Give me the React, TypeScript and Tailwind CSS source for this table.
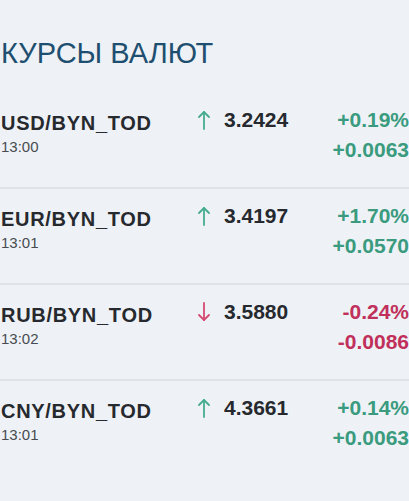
import React from "react";

type Row = {
  name: string;
  time: string;
  up: boolean;
  value: string;
  pct: string;
  abs: string;
};

const rows: Row[] = [
  { name: "USD/BYN_TOD", time: "13:00", up: true, value: "3.2424", pct: "+0.19%", abs: "+0.0063" },
  { name: "EUR/BYN_TOD", time: "13:01", up: true, value: "3.4197", pct: "+1.70%", abs: "+0.0570" },
  { name: "RUB/BYN_TOD", time: "13:02", up: false, value: "3.5880", pct: "-0.24%", abs: "-0.0086" },
  { name: "CNY/BYN_TOD", time: "13:01", up: true, value: "4.3661", pct: "+0.14%", abs: "+0.0063" },
];

function Arrow({ up }: { up: boolean }) {
  const color = up ? "#45ab8e" : "#d44a72";
  return (
    <svg width="14" height="20" viewBox="0 0 14 20" fill="none" stroke={color} strokeWidth="1.8" strokeLinecap="round" strokeLinejoin="round">
      {up ? (
        <>
          <path d="M7 2 V19" />
          <path d="M2 7 L7 2 L12 7" />
        </>
      ) : (
        <>
          <path d="M7 1 V18" />
          <path d="M2 13 L7 18 L12 13" />
        </>
      )}
    </svg>
  );
}

export default function App() {
  return (
    <div className="min-h-[501px] w-[409px] overflow-hidden bg-[#eef2f6] font-['Liberation_Sans',Arial,sans-serif]">
      <h1 className="pl-[1px] pt-[35px] text-[29px] leading-[37px] text-[#1f4f70]">КУРСЫ ВАЛЮТ</h1>
      <div className="mt-[21px]">
        {rows.map((r, i) => (
          <div
            key={r.name}
            className={`flex pt-[12px] pb-[22px] ${i < rows.length - 1 ? "border-b-2 border-[#dde3e9]" : ""}`}
          >
            <div className="w-[197px] pl-[1px]">
              <div className="mt-[3px] text-[20px] font-bold leading-[30px] tracking-[0.7px] text-[#26292e]">{r.name}</div>
              <div className="text-[15px] leading-[18px] text-[#474c52]">{r.time}</div>
            </div>
            <div className="flex h-[30px] items-center">
              <Arrow up={r.up} />
            </div>
            <div className="ml-[13px] text-[21px] font-bold leading-[30px] text-[#26292e]">{r.value}</div>
            <div
              className={`ml-auto text-right text-[21px] font-bold leading-[30px] ${r.up ? "text-[#3a9b7e]" : "text-[#c0305b]"}`}
            >
              <div>{r.pct}</div>
              <div>{r.abs}</div>
            </div>
          </div>
        ))}
      </div>
    </div>
  );
}
